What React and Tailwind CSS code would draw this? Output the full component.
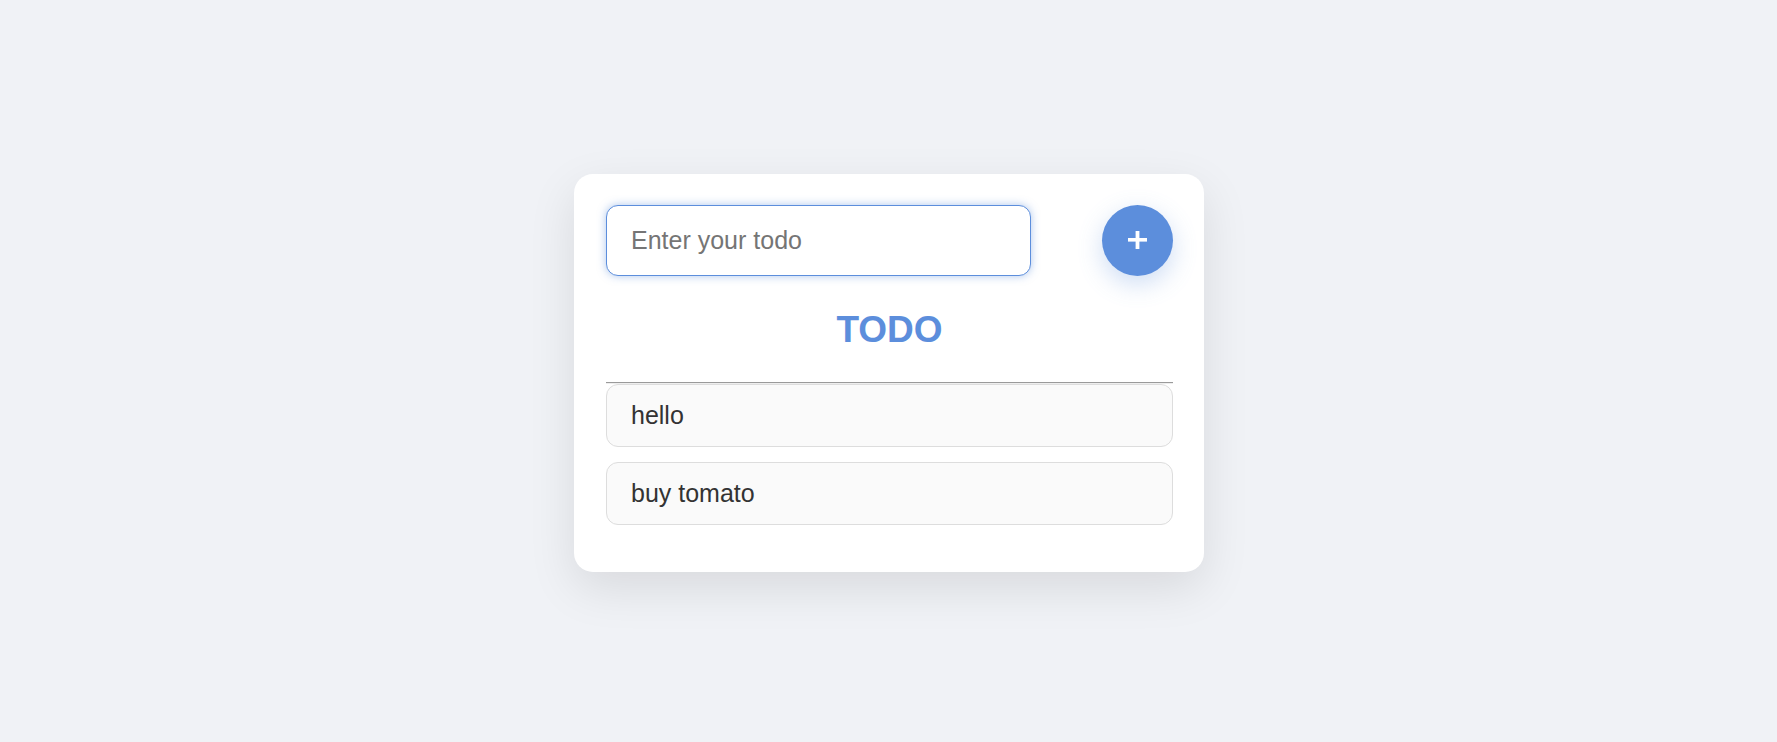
import { useState } from "react";

export default function App() {
  const [todos, setTodos] = useState(["hello", "buy tomato"]);
  const [text, setText] = useState("");

  const addTodo = (event) => {
    event.preventDefault();
    const value = text.trim();
    if (!value) return;
    setTodos([...todos, value]);
    setText("");
  };

  return (
    <div className="flex min-h-screen items-center justify-center bg-[#f0f2f6] pt-1 pl-px font-['Liberation_Sans',Arial,sans-serif] text-[25px] leading-[29px] text-[#333]">
      <main className="w-full max-w-[630px] rounded-[19px] bg-white pt-[31px] pr-[31px] pb-8 pl-8 shadow-[0_16px_47px_rgba(0,0,0,0.1)]">
        <form onSubmit={addTodo} className="flex items-center justify-between">
          <input
            type="text"
            aria-label="Enter your todo"
            placeholder="Enter your todo"
            value={text}
            onChange={(event) => setText(event.target.value)}
            className="h-[71px] w-3/4 rounded-[12px] border border-[#5c8edc] bg-white px-6 shadow-[0_0_8px_rgba(92,142,220,0.5)] outline-none placeholder:text-[#757575]"
          />
          <button
            type="submit"
            aria-label="Add todo"
            className="flex size-[71px] items-center justify-center rounded-full bg-[#5c8edc] text-white shadow-[0_8px_24px_rgba(92,142,220,0.3)]"
          >
            <svg viewBox="0 0 21 21" className="size-[21px]" fill="currentColor" aria-hidden="true">
              <rect x="1" y="8" width="19" height="3.6" />
              <rect x="8.6" y="1" width="3.8" height="18" />
            </svg>
          </button>
        </form>
        <h1 className="pt-8 pb-[30px] text-center text-[37px] leading-[44px] font-bold text-[#5c8edc]">
          TODO
        </h1>
        <hr className="h-0.5 border-t border-b border-t-[#9a9a9a] border-b-[#eeeeee]" />
        <ul>
          {todos.map((todo, index) => (
            <li
              key={index}
              className="mb-[15px] rounded-[12px] border border-[#dddddd] bg-[#fafafa] px-6 py-4"
            >
              {todo}
            </li>
          ))}
        </ul>
      </main>
    </div>
  );
}
